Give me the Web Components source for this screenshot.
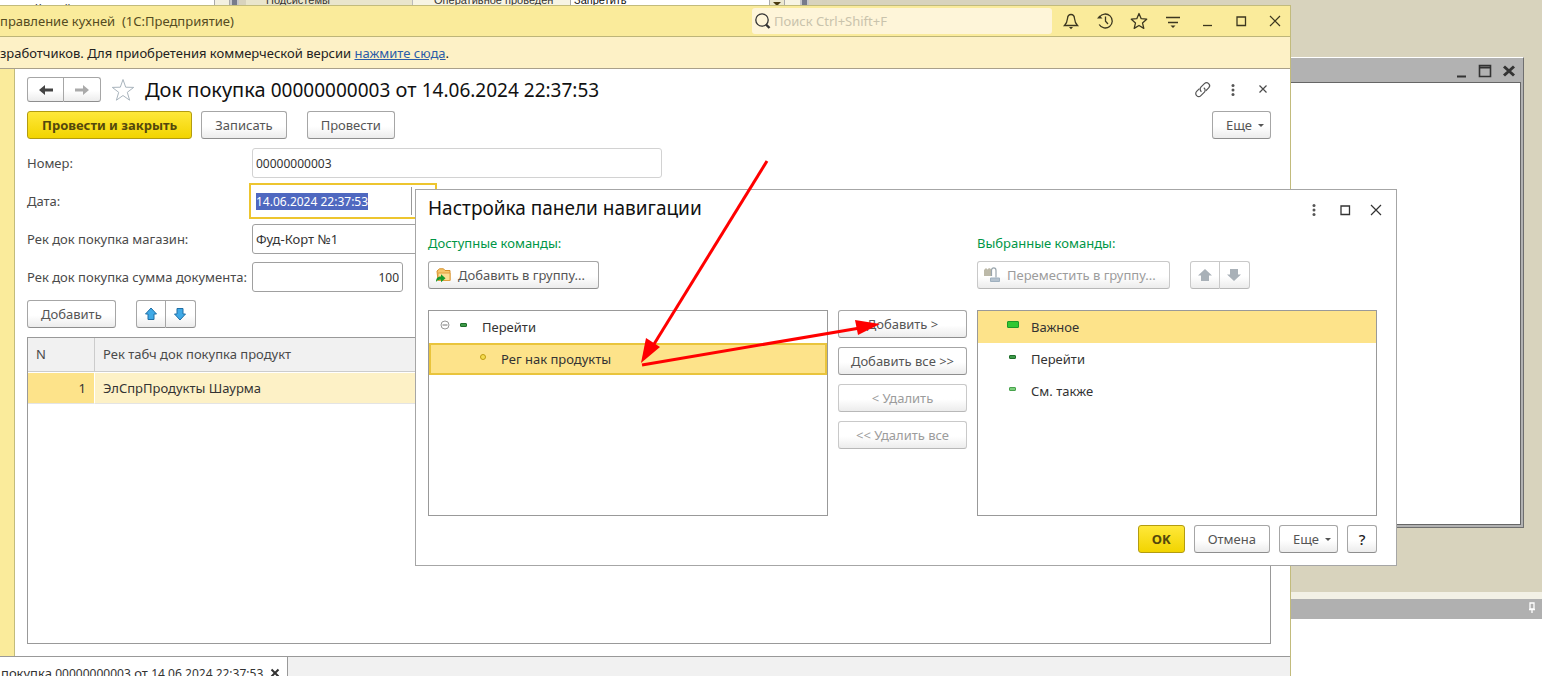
<!DOCTYPE html>
<html lang="ru">
<head>
<meta charset="utf-8">
<title>Управление кухней (1С:Предприятие)</title>
<style>
html, body { height: 100%; }
body { margin: 0; overflow: hidden; font: 13px/18px "Noto Sans", "Open Sans", sans-serif; color: #4a4a4a; background: #d8d3bd; }
</style>
</head>
<body>
<desk-top>
  <designer-strip slot="strip"></designer-strip>
  <designer-window slot="window"></designer-window>
  <main-window slot="window">
    <doc-form></doc-form>
  </main-window>
  <nav-dialog slot="window"></nav-dialog>
  <red-arrows slot="window"></red-arrows>
</desk-top>
<script>
const define = (name, html, setup) => {
  const tpl = document.createElement('template');
  tpl.innerHTML = '<style>:host{box-sizing:border-box}:host *{box-sizing:border-box}</style>' + html;
  customElements.define(name, class extends HTMLElement {
    constructor() {
      super();
      this.attachShadow({ mode: 'open' }).append(tpl.content.cloneNode(true));
    }
    connectedCallback() { if (setup) setup(this, this.shadowRoot); }
  });
};

const ICONS = {
  bell: [20, '<path d="M3.5 14.5h13c-2-2-2.700-3.500-3-7C13.300 4.500 12 3.500 10 3.500S6.700 4.500 6.500 7.500c-.3 3.500-1 5-3 7z" fill="none" stroke="currentColor" stroke-width="1.3"/><path d="M8 16h4l-2 2.200z" fill="currentColor"/>'],
  history: [20, '<path d="M4.500 6A7 7 0 1 1 4.200 13.500" fill="none" stroke="currentColor" stroke-width="1.3"/><path d="M2 7.500l2.500-3 3 3z" fill="currentColor"/><path d="M10.500 5.500v4.800l2.500 2.700" fill="none" stroke="currentColor" stroke-width="1.3"/>'],
  star: [20, '<path d="M10 2.500l2.200 5.200 5.500.5-4.200 3.700 1.300 5.500L10 14.500l-4.800 2.900 1.300-5.500-4.200-3.700 5.500-.5z" fill="none" stroke="currentColor" stroke-width="1.3" stroke-linejoin="round"/>'],
  bigstar: [24, '<path d="M12 1.500l2.700 7.700 8 .2-6.400 4.900 2.300 7.900-6.600-4.700-6.600 4.700 2.300-7.900L1.300 9.400l8-.2z" fill="#fff" stroke="#a9b4bd"/>'],
  menu: [20, '<path d="M3 6.500h14M5 11.500h10" stroke="currentColor" stroke-width="1.300"/><path d="M7.500 14.500h5L10 17z" fill="currentColor"/>'],
  min: [20, '<path d="M6 14.500h9" stroke="currentColor" stroke-width="1.300"/>'],
  max: [20, '<path d="M6 6h8.500v8.500H6z" fill="none" stroke="currentColor" stroke-width="1.300"/>'],
  close: [20, '<path d="M5 5l10 10M15 5L5 15" stroke="currentColor" stroke-width="1.200"/>'],
  smallclose: [16, '<path d="M4.500 3.500l7 7M11.500 3.500l-7 7" stroke="currentColor" stroke-width="1.200"/>'],
  boldclose: [16, '<path d="M4.500 4.500l7 7M11.500 4.500l-7 7" stroke="currentColor" stroke-width="2"/>'],
  dots: [16, '<g fill="#555"><circle cx="8" cy="3.500" r="1.500"/><circle cx="8" cy="8" r="1.500"/><circle cx="8" cy="12.500" r="1.500"/></g>'],
  link: [16, '<g transform="rotate(-45 8 8)" fill="none" stroke="#555" stroke-width="1.200"><path d="M6.500 4.500H2.500a3 3 0 0 0 0 6h5a3 3 0 0 0 2.700-3.600"/><path d="M9.500 10.500h4a3 3 0 0 0 0-6h-5a3 3 0 0 0-2.700 3.600"/></g>'],
  search: [20, '<circle cx="10" cy="9" r="6.200" fill="none" stroke="#333" stroke-width="1.300"/><path d="M14 13.500l3.500 3.500" stroke="#333" stroke-width="2.400"/>'],
  back: [16, '<path d="M1 8l6-5v3.600h8v2.800H7V13z" fill="#444"/>'],
  forward: [16, '<path d="M15 8L9 3v3.600H1v2.800h8V13z" fill="#aaa"/>'],
  up: [16, '<path d="M8 2l5.500 6H11v5.500H5V8H2.500z" fill="#3fa9e6" stroke="#1f6fa6"/>'],
  down: [16, '<path d="M8 14L2.500 8H5V2.500h6V8h2.500z" fill="#3fa9e6" stroke="#1f6fa6"/>'],
  upoff: [16, '<path d="M8 2l7 6.500h-3V14H4V8.500H1z" fill="#a9b1b8"/>'],
  downoff: [16, '<path d="M8 14L1 7.500h3V2h8v5.500h3z" fill="#a9b1b8"/>'],
  folder: [16, '<path d="M2 4l2.500-2.200h4L10 3.500h5v10H3z" fill="#f6c66c" stroke="#d58f2c"/><path d="M3 6h12v7.500H3z" fill="#fbdd93" stroke="#e0a040"/><path d="M1 15c0-4 2-5.500 5-5.500V7.300l4.500 4-4.500 4v-2.500c-2.500 0-4 .5-5 2.200z" fill="#159a2c"/>'],
  move: [16, '<path d="M0 3l2-2 1.500 1.500L5 1l3 1.500V9H0z" fill="#bcb9a8"/><path d="M7.500 9V3.500C7.500 0 12 0 12 3.500v7" fill="none" stroke="#9aa5ad" stroke-width="1.200"/><path d="M6.500 11h9v3.500h-9z" fill="#b5c2ce" stroke="#9fb0bf"/>'],
  minus: [10, '<circle cx="5" cy="5" r="4" fill="#fff" stroke="#999"/><path d="M2.500 5h5" stroke="#777"/>'],
  dash: [8, '<rect x=".5" y="2.500" width="6" height="3" rx=".5" fill="#3d9a48" stroke="#1f6e2b"/>'],
  dashlight: [8, '<rect x=".5" y="2.500" width="6" height="3" rx=".5" fill="#7ccf7c" stroke="#47a24c"/>'],
  block: [12, '<rect x=".5" y="2.500" width="11" height="6" rx=".5" fill="#32c832" stroke="#1c9a28"/>'],
  dot: [8, '<circle cx="4" cy="4" r="2.500" fill="#f4dc50" stroke="#bf9b10"/>'],
  dmin: [16, '<path d="M4 12.500h9" stroke="#333" stroke-width="2"/>'],
  dmax: [16, '<path d="M2.500 1.500h11v11h-11z" fill="none" stroke="#333" stroke-width="1.600"/><path d="M2 3.500h12" stroke="#333" stroke-width="2"/>'],
  dclose: [16, '<path d="M3 2.500l10 9M13 2.500l-10 9" stroke="#333" stroke-width="3"/>'],
  caret: [6, '<path d="M0 2h6L3 5z" fill="currentColor"/>'],
  pin: [8, '<path d="M2 1h4v6H2zM1 7.500h6M4 8v3" fill="none" stroke="#fff" stroke-width="1.300"/>']
};
define('ui-icon', '<style>:host{display:inline-flex;flex:none}svg{display:block;overflow:visible}</style><svg aria-hidden="true"></svg>', (el, root) => {
  const [size, body] = ICONS[el.getAttribute('name')];
  const svg = root.querySelector('svg');
  svg.setAttribute('viewBox', `0 0 ${size} ${size}`);
  svg.setAttribute('width', size);
  svg.setAttribute('height', size);
  svg.innerHTML = body;
});

define('icon-button', `<style>
  :host{display:inline-flex;width:30px;height:24px;flex:none}
  button{all:unset;display:flex;flex:1;align-items:center;justify-content:center;color:inherit}
</style><button type="button"><slot></slot></button>`, (el, root) => {
  root.querySelector('button').setAttribute('aria-label', el.getAttribute('label') || '');
});

define('ui-button', `<style>
  :host{display:inline-flex;height:28px;flex:none}
  button{display:flex;flex:1;min-width:0;align-items:center;justify-content:center;gap:6px;margin:0;padding:0 var(--button-pad,13px);font:inherit;color:#555;white-space:nowrap;
    background:linear-gradient(#fff 55%,#ececec);border:1px solid #a6a6a6;border-bottom-color:#8e8e8e;border-radius:3px}
  :host([primary]) button{background:linear-gradient(#ffe83a,#f2d400);border-color:#b39c10;color:#54480c;font-weight:bold}
  :host([off]) button{color:#9c9c9c;border-color:#c9c9c9;border-bottom-color:#b8b8b8}
  :host([icon]) button{gap:7px;padding:0 13px 0 6px}
  :host([more]) button{padding:0 6px 0 13px}
  :host([glyph]) button{padding:0;width:30px}
  :host([nav]) button{padding:0;width:37px}
  :host([first]) button{border-radius:3px 0 0 3px}
  :host([last]) button{border-radius:0 3px 3px 0;border-left:0}
  :host([dark]) button{color:#222;font-size:15px;font-weight:500}
</style><button type="button"><slot></slot></button>`, (el, root) => {
  root.querySelector('button').disabled = el.hasAttribute('off');
  if (el.hasAttribute('label')) root.querySelector('button').setAttribute('aria-label', el.getAttribute('label'));
});

define('ui-field', `<style>
  :host{display:grid;grid-template-columns:225px minmax(0,1fr);align-items:center;height:30px;width:635px}
  label{white-space:nowrap}
  .box{display:flex;height:30px;border:1px solid #a0a0a0;border-radius:3px;background:#fff}
  input{flex:1;min-width:0;height:28px;padding:0 3px;border:0;background:none;outline:0;font:inherit;color:#333}
  input::selection{background:#4f68c0;color:#fff}
  .pick{display:none;width:22px;border-left:1px solid #999}
  :host([numeric]) input{font-size:12px}
  :host([readonly]) .box{border-color:#d2d2d2}
  :host([date]){width:407px}
  :host([date]) .box{border-color:#fff;outline:2px solid #edc52f;outline-offset:1px;border-radius:0}
  :host([date]) .pick{display:block}
  :host([number]){width:376px}
  :host([number]) input{text-align:right}
</style><label for="i"></label><div class="box"><input id="i" type="text"><span class="pick"></span></div>`, (el, root) => {
  root.querySelector('label').textContent = el.getAttribute('label');
  const input = root.querySelector('input');
  input.value = el.getAttribute('value');
  input.readOnly = el.hasAttribute('readonly');
  if (el.hasAttribute('date')) {
    input.focus({ preventScroll: true });
    input.select();
  }
});

define('doc-table', `<style>
  :host{display:block;flex:1;border:1px solid #999;background:#fff;overflow:hidden}
  table{width:100%;border-collapse:separate;border-spacing:0;table-layout:fixed}
  th,td{padding:0 8px;text-align:left;font-weight:normal}
  th{height:34px;padding-bottom:1px;background:#f1f1f1;border-bottom:1px solid #ccc}
  th:first-child{width:67px;border-right:1px solid #ccc}
  td{height:32px;background:#fdf1c6;color:#333;border-top:1px solid #fff;border-bottom:1px solid #e4e4e4}
  td:first-child{background:#fde38a;border-right:1px solid #fff;text-align:right}
</style><table><thead><tr><th>N</th><th>Рек табч док покупка продукт</th></tr></thead>
<tbody><tr><td>1</td><td>ЭлСпрПродукты Шаурма</td></tr></tbody></table>`);

define('doc-form', `<style>
  :host{display:flex;flex-direction:column;flex:1;min-width:0;padding:8px 19px 12px 12px;background:#fff}
  header{display:flex;align-items:center;height:25px;margin-bottom:9px}
  header ui-button{height:25px}
  header>ui-icon{margin:0 10px}
  h1{margin:0;flex:1;font-size:20px;line-height:25px;font-weight:normal;color:#111;white-space:nowrap}
  h1 span{font-size:19px}
  .tools{display:flex;gap:14px}
  .tools icon-button{width:16px}
  .bar{display:flex;gap:9px}
  .bar ui-button[primary]{--button-pad:14px}
  .bar .gap{margin-left:11px}
  .push{margin-left:auto}
  .fields{display:flex;flex-direction:column;gap:8px;margin:9px 0 8px}
  .cmd{gap:20px;margin-bottom:9px}
  .pair{display:flex}
</style>
<header><span class="pair"><ui-button nav first label="Назад"><ui-icon name="back"></ui-icon></ui-button><ui-button nav last label="Вперед"><ui-icon name="forward"></ui-icon></ui-button></span>
<ui-icon name="bigstar"></ui-icon><h1>Док покупка <span>00000000003</span> от <span>14.06.2024 22:37:53</span></h1>
<span class="tools"><icon-button label="Ссылка"><ui-icon name="link"></ui-icon></icon-button><icon-button label="Меню"><ui-icon name="dots"></ui-icon></icon-button><icon-button label="Закрыть"><ui-icon name="smallclose"></ui-icon></icon-button></span></header>
<div class="bar"><ui-button primary>Провести и закрыть</ui-button><ui-button>Записать</ui-button><ui-button class="gap">Провести</ui-button><ui-button more class="push">Еще<ui-icon name="caret"></ui-icon></ui-button></div>
<div class="fields">
<ui-field readonly numeric label="Номер:" value="00000000003"></ui-field>
<ui-field date numeric label="Дата:" value="14.06.2024 22:37:53"></ui-field>
<ui-field label="Рек док покупка магазин:" value="Фуд-Корт №1"></ui-field>
<ui-field number numeric label="Рек док покупка сумма документа:" value="100"></ui-field></div>
<div class="bar cmd"><ui-button>Добавить</ui-button><span class="pair"><ui-button glyph first label="Вверх"><ui-icon name="up"></ui-icon></ui-button><ui-button glyph last label="Вниз"><ui-icon name="down"></ui-icon></ui-button></span></div>
<doc-table></doc-table>`);

define('main-window', `<style>
  :host{position:absolute;left:0;top:5px;right:251px;bottom:0;display:flex;flex-direction:column;background:#fff;border-top:1px solid #c2bb7c;border-right:1px solid #c2bb7c}
  .title{display:flex;align-items:center;gap:4px;height:31px;background:#faeb9b;border-bottom:1px solid #bdb578;color:#554c22}
  .title b{flex:1;font-weight:normal;white-space:pre}
  .search{display:flex;align-items:center;width:300px;height:26px;background:#fef5d9;border-radius:3px}
  .search input{flex:1;min-width:0;border:0;padding:0 2px;background:none;font:inherit}
  .search input::placeholder{color:#c9c3ac;opacity:1}
  .wbtns{display:flex;gap:4px;color:#3c3720}
  .info{height:32px;padding-top:7px;background:#fdf1c6;border-bottom:1px solid #a9a08a;color:#222;white-space:nowrap}
  a{color:#2b5da8}
  .body{display:flex;flex:1;min-height:0}
  .side{width:15px;background:#faeb9b;border-right:1px solid #c2bb7c}
  .tabs{height:20px;border-top:1px solid #999;background:#f1f1f1;overflow:hidden}
  .tab{display:inline-flex;align-items:center;gap:4px;height:32px;padding:0 4px 0 1px;background:#fff;border-right:1px solid #999;color:#333}
  .tab small{font-size:12px}
</style>
<div class="title"><b>правление кухней  (1С:Предприятие)</b>
<div class="search"><ui-icon name="search"></ui-icon><input type="search" aria-label="Поиск" placeholder="Поиск Ctrl+Shift+F"></div>
<div class="wbtns"><icon-button label="Уведомления"><ui-icon name="bell"></ui-icon></icon-button><icon-button label="История"><ui-icon name="history"></ui-icon></icon-button><icon-button label="Избранное"><ui-icon name="star"></ui-icon></icon-button><icon-button label="Сервис"><ui-icon name="menu"></ui-icon></icon-button><icon-button label="Свернуть"><ui-icon name="min"></ui-icon></icon-button><icon-button label="Развернуть"><ui-icon name="max"></ui-icon></icon-button><icon-button label="Закрыть"><ui-icon name="close"></ui-icon></icon-button></div></div>
<div class="info">зработчиков. Для приобретения коммерческой версии <a href="#">нажмите сюда</a>.</div>
<div class="body"><div class="side"></div><slot style="display:contents"></slot></div>
<div class="tabs"><div class="tab"><span>покупка <small>00000000003</small> от <small>14.06.2024 22:37:53</small></span><ui-icon name="boldclose"></ui-icon></div></div>`);

define('command-item', `<style>
  :host{display:flex;align-items:center;height:32px;padding-left:29px;color:#333}
  :host([selected]){background:#fde38a}
  :host([current]){border:2px solid #e9c43c}
  .ic{display:flex;width:24px;align-items:center;padding-bottom:4px}
  ::slotted(ui-icon){width:12px;justify-content:center}
  :host([parent]){padding-left:10px}
  :host([parent]) .ic{width:43px;gap:7px}
  :host([current]){padding-left:46px}
</style><span class="ic"><slot name="icon"></slot></span><slot></slot>`);

define('command-list', `<style>:host{display:block;height:206px;border:1px solid #999;background:#fff}</style><slot></slot>`);

define('nav-dialog', `<style>
  :host{position:absolute;left:415px;top:189px;right:145px;background:#fff;border:1px solid #a6a6a6}
  header{display:flex;align-items:center;height:40px;padding:0 10px 0 12px}
  h2{flex:1;margin:0;padding-bottom:4px;font-size:19px;line-height:28px;font-weight:normal;color:#111}
  .tools{display:flex;gap:11px;color:#333}
  .tools icon-button{width:20px}
  .grid{display:grid;grid-template-columns:1fr 129px 1fr;column-gap:10px;padding:4px 19px 9px 12px}
  .cap{height:27px;color:#009646}
  .bar{display:flex;gap:20px;margin-bottom:21px}
  .mid{display:flex;flex-direction:column;gap:9px;padding-top:76px;--button-pad:6px}
  .pair{display:flex}
  footer{display:flex;justify-content:flex-end;gap:9px;padding:0 19px 12px}
</style>
<header><h2>Настройка панели навигации</h2><span class="tools"><icon-button label="Меню"><ui-icon name="dots"></ui-icon></icon-button><icon-button label="Развернуть"><ui-icon name="max"></ui-icon></icon-button><icon-button label="Закрыть"><ui-icon name="close"></ui-icon></icon-button></span></header>
<div class="grid">
<section><div class="cap">Доступные команды:</div><div class="bar"><ui-button icon><ui-icon name="folder"></ui-icon>Добавить в группу...</ui-button></div>
<command-list><command-item parent><ui-icon slot="icon" name="minus"></ui-icon><ui-icon slot="icon" name="dash"></ui-icon>Перейти</command-item><command-item selected current><ui-icon slot="icon" name="dot"></ui-icon>Рег нак продукты</command-item></command-list></section>
<div class="mid"><ui-button>Добавить &gt;</ui-button><ui-button>Добавить все &gt;&gt;</ui-button><ui-button off>&lt; Удалить</ui-button><ui-button off>&lt;&lt; Удалить все</ui-button></div>
<section><div class="cap">Выбранные команды:</div><div class="bar"><ui-button icon off><ui-icon name="move"></ui-icon>Переместить в группу...</ui-button><span class="pair"><ui-button glyph off first label="Вверх"><ui-icon name="upoff"></ui-icon></ui-button><ui-button glyph off last label="Вниз"><ui-icon name="downoff"></ui-icon></ui-button></span></div>
<command-list><command-item selected><ui-icon slot="icon" name="block"></ui-icon>Важное</command-item><command-item><ui-icon slot="icon" name="dash"></ui-icon>Перейти</command-item><command-item><ui-icon slot="icon" name="dashlight"></ui-icon>См. также</command-item></command-list></section>
</div>
<footer><ui-button primary>OK</ui-button><ui-button>Отмена</ui-button><ui-button more>Еще<ui-icon name="caret"></ui-icon></ui-button><ui-button glyph dark>?</ui-button></footer>`);

define('designer-strip', `<style>
  :host{display:flex;height:6px;overflow:hidden;font:11px/12px "Liberation Sans",Arial,sans-serif;color:#333}
  div{height:6px;overflow:hidden;flex:none}
  .tree{width:214px;padding:2px 0 0 35px;background:#fff}
  .scroll{width:16px;background:#f3f0e0;border:solid #aaa;border-width:0 1px}
  .edge{width:9px;background:#777b8c;border:solid #c8c8cc;border-width:0 2px}
  .tabs,.prop{display:flex;align-items:flex-end}
  .tabs{width:167px;margin-left:7px;padding-left:20px;background:#e9e5cc;border-right:1px solid #bbb}
  .prop{width:157px;padding-left:21px;background:#f7f4e4;white-space:nowrap}
  .val{display:flex;align-items:flex-end;width:199px;padding-left:3px;background:#fff;border-left:1px solid #aaa;color:#111}
  .drop{width:16px;background:#ece8d0;border:solid #aaa;border-width:0 1px}
  .pad{width:15px;background:#f7f4e4}
  svg{display:block;margin:auto}
</style><div class="tree">Кухней</div><div class="scroll"></div><div class="edge"></div><div class="tabs">Подсистемы</div><div class="prop">Оперативное проведен</div><div class="val">Запретить</div><div class="drop"><svg width="8" height="6"><path d="M0 2h8L4 6z" fill="#4a3a10"/></svg></div><div class="pad"></div><div class="edge"></div>`);

define('designer-window', `<style>
  :host{position:absolute;top:57px;right:18px;bottom:148px;left:50%;display:flex;flex-direction:column;background:#b2b2b2;border:1px solid #6f6f6f;border-top-color:#fff;padding:0 2px 2px 0}
  header{display:flex;justify-content:flex-end;align-items:center;gap:8px;height:24px;padding:4px 4px 0}
  .page{flex:1;background:#fff;border:1px solid #666}
</style><header><ui-icon name="dmin"></ui-icon><ui-icon name="dmax"></ui-icon><ui-icon name="dclose"></ui-icon></header><div class="page"></div>`);

define('desk-top', `<style>
  :host{position:relative;display:flex;flex-direction:column;height:100vh;overflow:hidden}
  .area{flex:1}
  .split{height:7px;background:#f3f1e6}
  .msg{display:flex;justify-content:flex-end;height:20px;padding:3px 6px;background:#b0b0b0}
  .out{height:57px;background:#fff}
</style><slot name="strip"></slot><div class="area"></div><div class="split"></div><div class="msg"><ui-icon name="pin"></ui-icon></div><div class="out"></div><slot name="window"></slot>`);

define('red-arrows', `<style>:host{position:absolute;left:630px;top:150px;pointer-events:none}svg{display:block}</style>
<svg width="260" height="230" viewBox="630 150 260 230" aria-hidden="true"><g stroke="#f00" stroke-width="3"><path d="M767 161L651 349"/><path d="M642 365L860 328"/></g><g fill="#f00"><path d="M641 363L646 338L660 347z"/><path d="M880 324L855 320L858 335z"/></g></svg>`);
</script>
</body>
</html>
